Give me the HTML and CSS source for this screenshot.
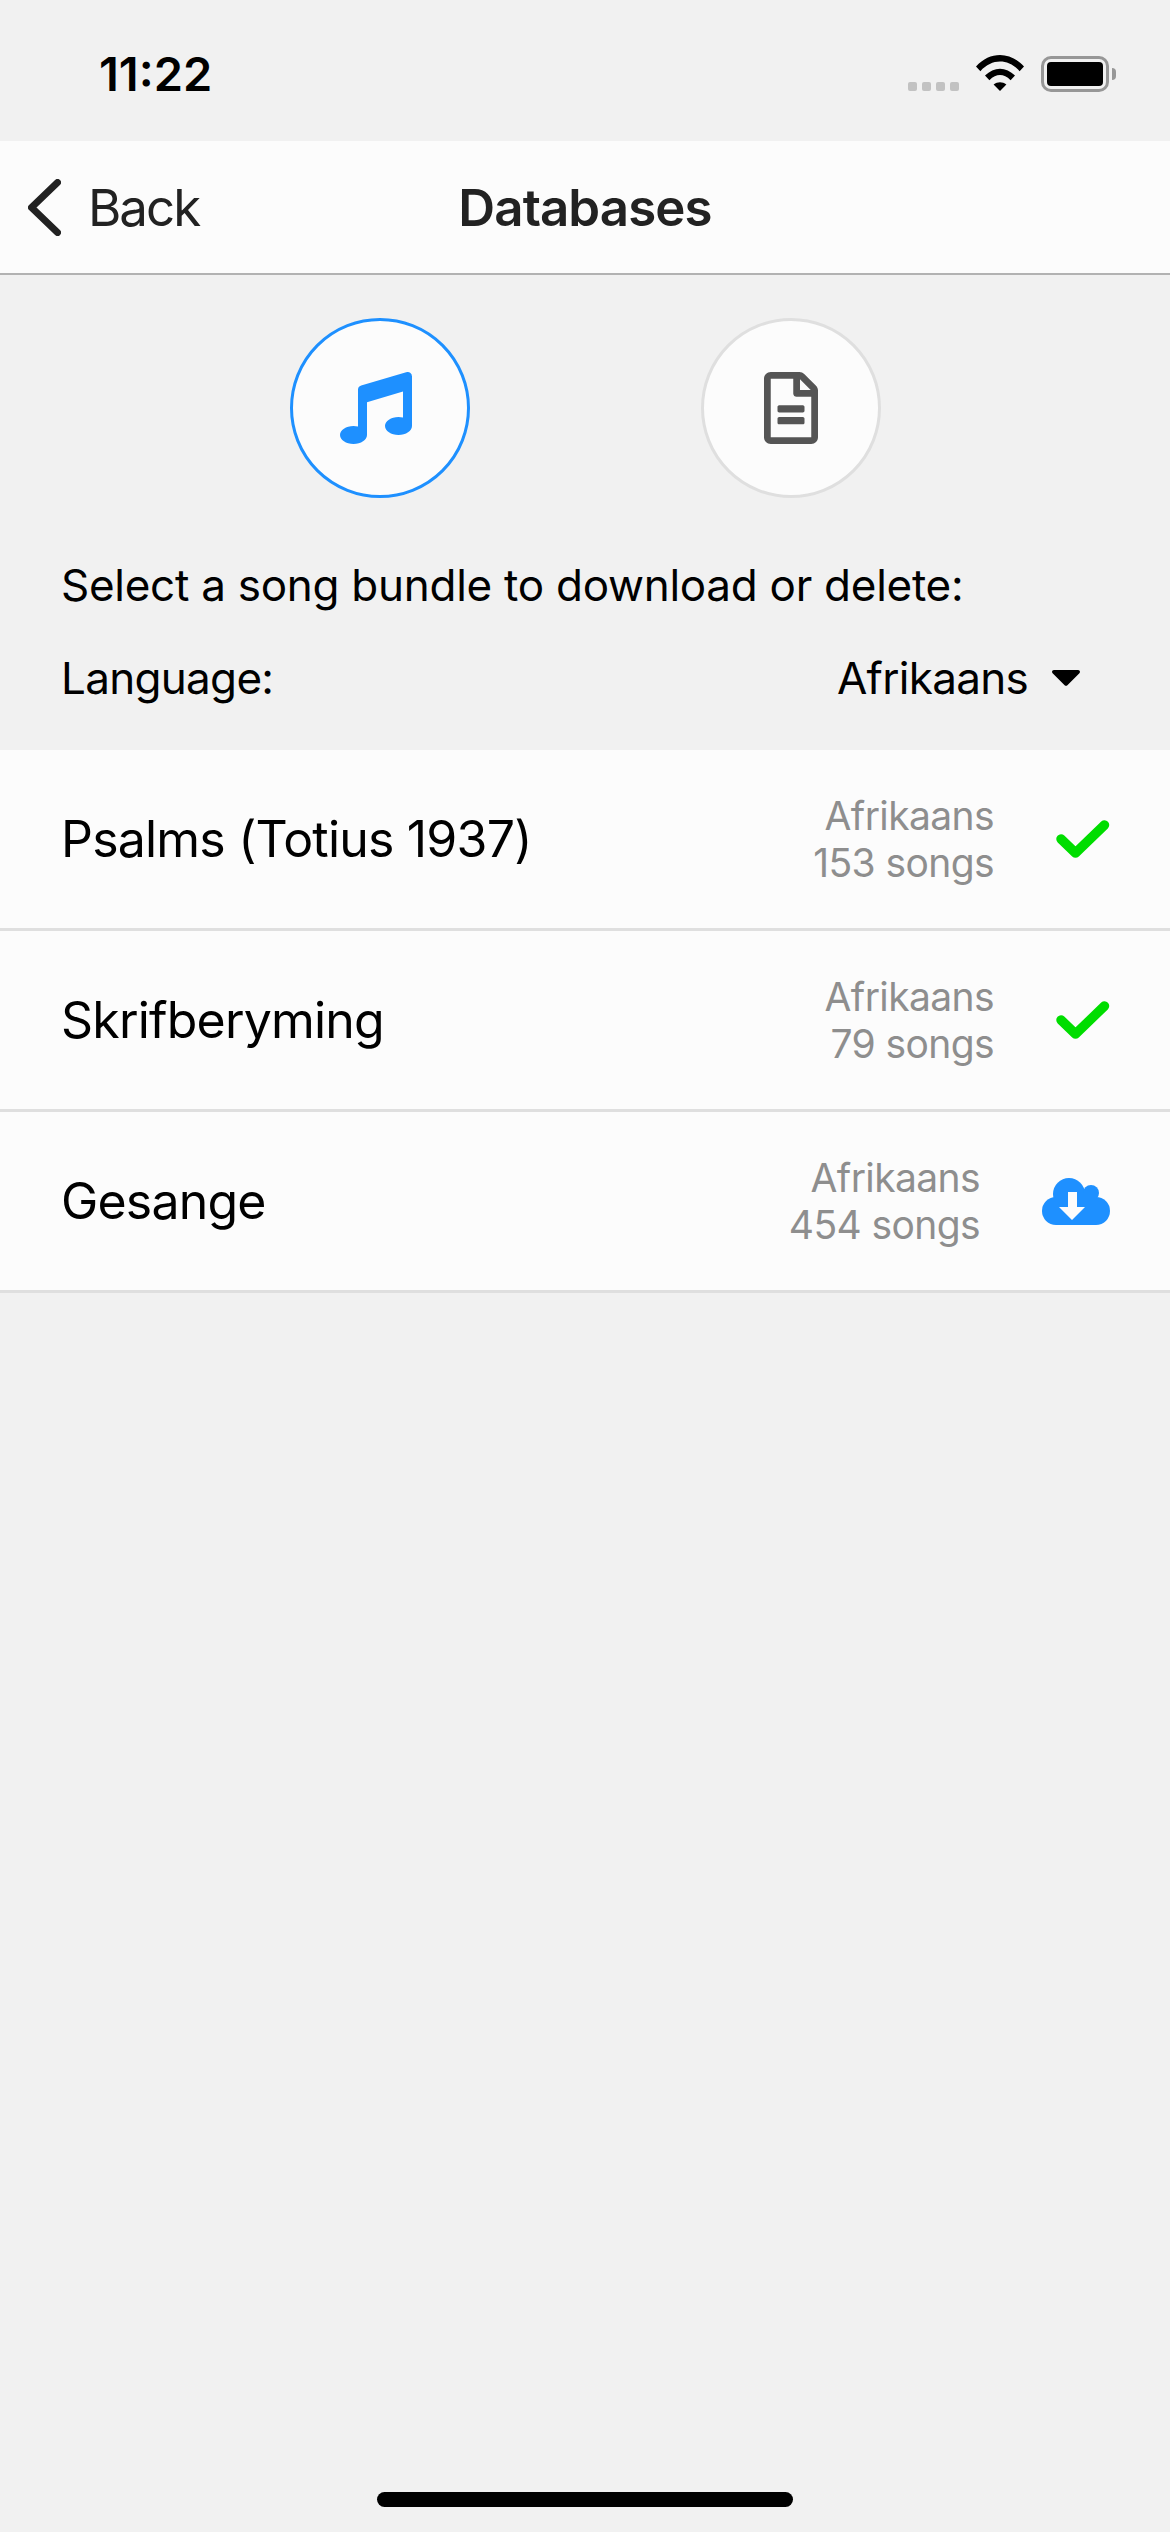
FILE: index.html
```html
<!DOCTYPE html>
<html lang="en">
<head>
  <meta charset="UTF-8">
  <title>Databases</title>
  <link rel="stylesheet" href="styles.css">
</head>
<body>
  <div class="status-bar">
    <span class="time">11:22</span>
    <div class="status-icons">
      <div class="signal"><i></i><i></i><i></i><i></i></div>
      <svg class="wifi" viewBox="0 0 48 36">
        <path d="M0 11.5C14 -3.8 34 -3.8 48 11.5L43.6 16.2C31.8 3.4 16.2 3.4 4.4 16.2Z"/>
        <path d="M9 20.6C18 11.4 30 11.4 39 20.6L34.6 25.2C27.4 18.4 20.6 18.4 13.4 25.2Z"/>
        <path d="M17.6 29.6C21.6 26.4 26.4 26.4 30.4 29.6L24 36Z"/>
      </svg>
      <div class="battery"><div class="battery-fill"></div></div>
      <div class="battery-nub"></div>
    </div>
  </div>

  <div class="navbar">
    <div class="back">
      <svg class="chevron" viewBox="0 0 33 57"><path d="M29.5 3.5L3.5 28.5L29.5 53.5"/></svg>
      <span>Back</span>
    </div>
    <div class="title">Databases</div>
    <div></div>
  </div>

  <div class="tabs">
    <div class="tab active">
      <svg class="tab-icon music" viewBox="0 0 512 512"><path d="M470.38 1.51L150.41 96A32 32 0 0 0 128 126.51v261.41A139 139 0 0 0 96 384c-53 0-96 28.66-96 64s43 64 96 64 96-28.66 96-64V214.32l256-75v184.61a138.4 138.4 0 0 0-32-3.93c-53 0-96 28.66-96 64s43 64 96 64 96-28.65 96-64V32a32 32 0 0 0-41.62-30.49z"/></svg>
    </div>
    <div class="tab">
      <svg class="tab-icon file" viewBox="0 0 384 512"><path d="M288 248v28c0 6.6-5.4 12-12 12H108c-6.6 0-12-5.4-12-12v-28c0-6.6 5.4-12 12-12h168c6.6 0 12 5.4 12 12zm-12 72H108c-6.6 0-12 5.4-12 12v28c0 6.6 5.4 12 12 12h168c6.6 0 12-5.4 12-12v-28c0-6.6-5.4-12-12-12zm108-188.1V464c0 26.5-21.5 48-48 48H48c-26.5 0-48-21.5-48-48V48C0 21.5 21.5 0 48 0h204.1C264.8 0 277 5.1 286 14.1L369.9 98c9 8.9 14.1 21.2 14.1 33.9zm-128-80V128h76.1L256 51.9zM336 464V176H232c-13.3 0-24-10.7-24-24V48H48v416h288z"/></svg>
    </div>
  </div>

  <p class="hint">Select a song bundle to download or delete:</p>
  <div class="language">
    <span>Language:</span>
    <div class="language-picker">
      <span>Afrikaans</span>
      <svg class="caret" viewBox="0 0 28 16"><path d="M2 0H26C27.8 0 28.6 2 27.4 3.2L15.4 15.2C14.6 16 13.4 16 12.6 15.2L0.6 3.2C-0.6 2 0.2 0 2 0Z"/></svg>
    </div>
  </div>

  <div class="bundles">
    <div class="bundle">
      <div class="bundle-name">Psalms (Totius 1937)</div>
      <div class="bundle-info">Afrikaans<br>153 songs</div>
      <svg class="check" viewBox="0 0 54 41"><path d="M5 20L19.5 34L48.5 6"/></svg>
    </div>
    <div class="bundle">
      <div class="bundle-name">Skrifberyming</div>
      <div class="bundle-info">Afrikaans<br>79 songs</div>
      <svg class="check" viewBox="0 0 54 41"><path d="M5 20L19.5 34L48.5 6"/></svg>
    </div>
    <div class="bundle">
      <div class="bundle-name">Gesange</div>
      <div class="bundle-info">Afrikaans<br>454 songs</div>
      <svg class="cloud" viewBox="0 0 68 47">
        <circle cx="27" cy="16" r="16"/>
        <circle cx="49" cy="15" r="8"/>
        <circle cx="14" cy="33" r="14"/>
        <circle cx="54" cy="33" r="14"/>
        <rect x="14" y="15" width="40" height="32"/>
        <path class="cloud-arrow" d="M26 14H35V29H43L30 42L17 29H26Z"/>
      </svg>
    </div>
  </div>

  <div class="home-indicator"></div>
</body>
</html>
```

FILE: styles.css
```css
* {
  box-sizing: border-box;
}
body {
  margin: 0;
  height: 2532px;
  display: flex;
  flex-direction: column;
  background-color: #f1f1f1;
  color: #000;
  font-family: "Inter", "Liberation Sans", sans-serif;
  overflow: hidden;
}

/* status bar */
.status-bar {
  height: 141px;
  padding: 48px 54px 0 99px;
  display: flex;
  justify-content: space-between;
  align-items: flex-start;
}
.time {
  font-size: 47px;
  line-height: 52px;
  font-weight: 600;
}
.status-icons {
  display: flex;
  align-items: flex-start;
  margin-top: 7px;
}
.signal {
  display: flex;
  gap: 5px;
  margin-top: 27px;
}
.signal i {
  width: 9px;
  height: 9px;
  border-radius: 2px;
  background-color: #c2c2c2;
}
.wifi {
  width: 48px;
  height: 36px;
  margin-left: 17px;
}
.battery {
  width: 68px;
  height: 36px;
  margin: 1px 0 0 17px;
  padding: 3px;
  border: 3px solid #979797;
  border-radius: 10px;
}
.battery-fill {
  height: 100%;
  background-color: #000;
  border-radius: 4px;
}
.battery-nub {
  width: 4px;
  height: 12px;
  margin: 13px 0 0 3px;
  background-color: #979797;
  border-radius: 0 6px 6px 0;
}

/* nav */
.navbar {
  height: 134px;
  display: grid;
  grid-template-columns: 1fr auto 1fr;
  align-items: center;
  background-color: #fcfcfc;
  border-bottom: 2px solid #b2b2b2;
  color: #222;
  font-size: 51px;
}
.back {
  display: flex;
  align-items: center;
  gap: 27px;
  padding-left: 28px;
  letter-spacing: -2px;
}
.chevron {
  width: 33px;
  height: 57px;
  fill: none;
  stroke: #222;
  stroke-width: 7;
  stroke-linecap: round;
  stroke-linejoin: round;
}
.title {
  font-weight: 600;
  letter-spacing: -0.9px;
}

/* tabs */
.tabs {
  display: flex;
  justify-content: center;
  gap: 231px;
  padding-top: 43px;
}
.tab {
  width: 180px;
  height: 180px;
  display: flex;
  align-items: center;
  justify-content: center;
  background-color: #fcfcfc;
  border: 3px solid #dfdfdf;
  border-radius: 50%;
}
.tab.active {
  border-color: #1e90ff;
}
.tab-icon {
  height: 72px;
}
.music {
  width: 72px;
  margin-right: 7px;
  fill: #1e90ff;
}
.file {
  width: 54px;
  fill: #555;
}

.hint {
  margin: 60px 0 0;
  padding-left: 61px;
  font-size: 44px;
  line-height: 54px;
  letter-spacing: -0.27px;
}
.language {
  display: flex;
  justify-content: space-between;
  align-items: center;
  height: 54px;
  margin-top: 39px;
  padding: 0 90px 0 61px;
  font-size: 44px;
  letter-spacing: -0.7px;
}
.language-picker {
  display: flex;
  align-items: center;
  gap: 24px;
}
.caret {
  width: 28px;
  height: 16px;
}

/* bundle list */
.bundles {
  margin-top: 45px;
}
.bundle {
  height: 181px;
  display: flex;
  align-items: center;
  padding: 0 60px 0 61px;
  background-color: #fcfcfc;
  border-bottom: 3px solid #dfdfdf;
}
.bundle-name {
  flex: 1;
  font-size: 50px;
  letter-spacing: -0.8px;
}
.bundle-info {
  margin-right: 62px;
  color: #8e8e8e;
  font-size: 39px;
  line-height: 47px;
  letter-spacing: -0.6px;
  text-align: right;
}
.check {
  width: 54px;
  height: 41px;
  fill: none;
  stroke: #00dd00;
  stroke-width: 9.5;
  stroke-linecap: round;
  stroke-linejoin: round;
}
.cloud {
  width: 68px;
  height: 47px;
  fill: #1e90ff;
}
.cloud-arrow {
  fill: #fcfcfc;
}

.home-indicator {
  width: 416px;
  height: 15px;
  margin: auto auto 25px;
  background-color: #000;
  border-radius: 8px;
}
```
